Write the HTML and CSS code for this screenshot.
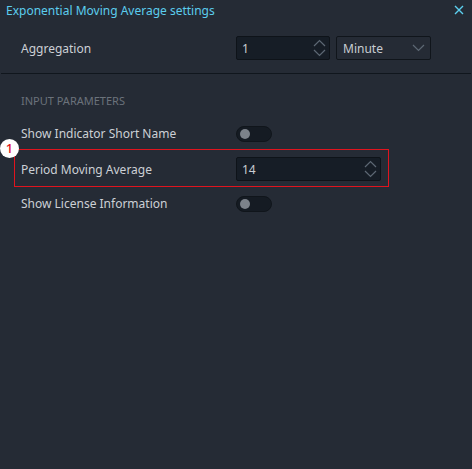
FILE: index.html
```html
<!DOCTYPE html>
<html>
<head>
<meta charset="utf-8">
<link rel="stylesheet" href="styles.css">
</head>
<body>
<div class="panel">
  <div class="header">
    <span class="title">Exponential Moving Average settings</span>
    <svg class="close" width="10" height="10" viewBox="0 0 10 10"><path d="M1 1 L9 9 M9 1 L1 9" stroke="#5cd0f0" stroke-width="1.4" fill="none"/></svg>
  </div>
  <div class="section top">
    <div class="row">
      <div class="label">Aggregation</div>
      <div class="controls">
        <div class="input small">
          <span class="val">1</span>
          <svg class="spin" width="13" height="18" viewBox="0 0 13 18"><path d="M1 7 L6.5 1.5 L12 7 M1 11 L6.5 16.5 L12 11" stroke="#5d6874" stroke-width="1.2" fill="none"/></svg>
        </div>
        <div class="select">
          <span class="val">Minute</span>
          <svg class="chev" width="13" height="8" viewBox="0 0 13 8"><path d="M1 1 L6.5 6.5 L12 1" stroke="#5d6874" stroke-width="1.2" fill="none"/></svg>
        </div>
      </div>
    </div>
  </div>
  <div class="section params">
    <div class="heading">INPUT PARAMETERS</div>
    <div class="row trow first">
      <div class="label">Show Indicator Short Name</div>
      <div class="toggle"><span class="knob"></span></div>
    </div>
    <div class="row marked">
      <span class="badge">1</span>
      <div class="label">Period Moving Average</div>
      <div class="input wide">
        <span class="val">14</span>
        <svg class="spin" width="13" height="18" viewBox="0 0 13 18"><path d="M1 7 L6.5 1.5 L12 7 M1 11 L6.5 16.5 L12 11" stroke="#5d6874" stroke-width="1.2" fill="none"/></svg>
      </div>
    </div>
    <div class="row trow last">
      <div class="label">Show License Information</div>
      <div class="toggle"><span class="knob"></span></div>
    </div>
  </div>
</div>
</body>
</html>
```

FILE: styles.css
```css
html, body {
  margin: 0;
  padding: 0;
  background: #252b35;
}
body {
  font-family: "Noto Sans", "Open Sans", sans-serif;
  font-size: 12px;
  color: #c8cdd2;
}
.panel {
  width: 472px;
  height: 469px;
  background: #252b35;
}
.header {
  height: 20px;
  display: flex;
  align-items: center;
  justify-content: space-between;
  padding: 0 8px 0 6px;
}
.title {
  color: #5ccdee;
  font-size: 12px;
}
.close {
  display: block;
}
.section.top {
  padding: 16px 0 13px 20px;
  border-bottom: 1px solid #10161d;
  margin: 0 1px;
}
.row {
  display: flex;
  align-items: center;
  height: 24px;
}
.label {
  width: 215px;
  flex: none;
  font-size: 12px;
  color: #ccd0d5;
}
.controls {
  display: flex;
  gap: 6px;
}
.input {
  box-sizing: border-box;
  height: 24px;
  background: #161d26;
  border: 1px solid #0e1319;
  border-radius: 2px;
  display: flex;
  align-items: center;
  justify-content: space-between;
  padding: 0 3px 0 5px;
}
.input.small { width: 94px; }
.input.wide { width: 145px; }
.select {
  box-sizing: border-box;
  height: 24px;
  width: 95px;
  border: 1px solid #10151b;
  border-radius: 2px;
  display: flex;
  align-items: center;
  justify-content: space-between;
  padding: 0 5px 0 6px;
}
.val {
  color: #c8cdd2;
  font-size: 12px;
}
.spin, .chev { display: block; }
.params {
  padding: 20px 0 0 21px;
}
.heading {
  height: 14px;
  line-height: 14px;
  font-size: 11px;
  color: #6b727b;
}
.trow { height: 23px; }
.trow.first { margin-top: 14px; }
.trow.last { margin-top: 5px; }
.toggle {
  box-sizing: border-box;
  width: 36px;
  height: 16px;
  border-radius: 8px;
  background: #151b23;
  border: 1px solid #10151b;
  display: flex;
  align-items: center;
  padding-left: 3px;
}
.knob {
  width: 10px;
  height: 10px;
  border-radius: 50%;
  background: #7c828a;
}
.marked {
  position: relative;
  height: 24px;
  margin: 4px 0 0 -7px;
  width: 360px;
  box-sizing: content-box;
  padding: 7px 7px 5px 6px;
  border: 1px solid #e0141e;
}
.badge {
  position: absolute;
  left: -15px;
  top: -11px;
  width: 19px;
  height: 19px;
  border-radius: 50%;
  background: #ffffff;
  color: #e0141e;
  font-size: 13px;
  line-height: 19px;
  text-align: center;
  font-weight: 500;
}
```
